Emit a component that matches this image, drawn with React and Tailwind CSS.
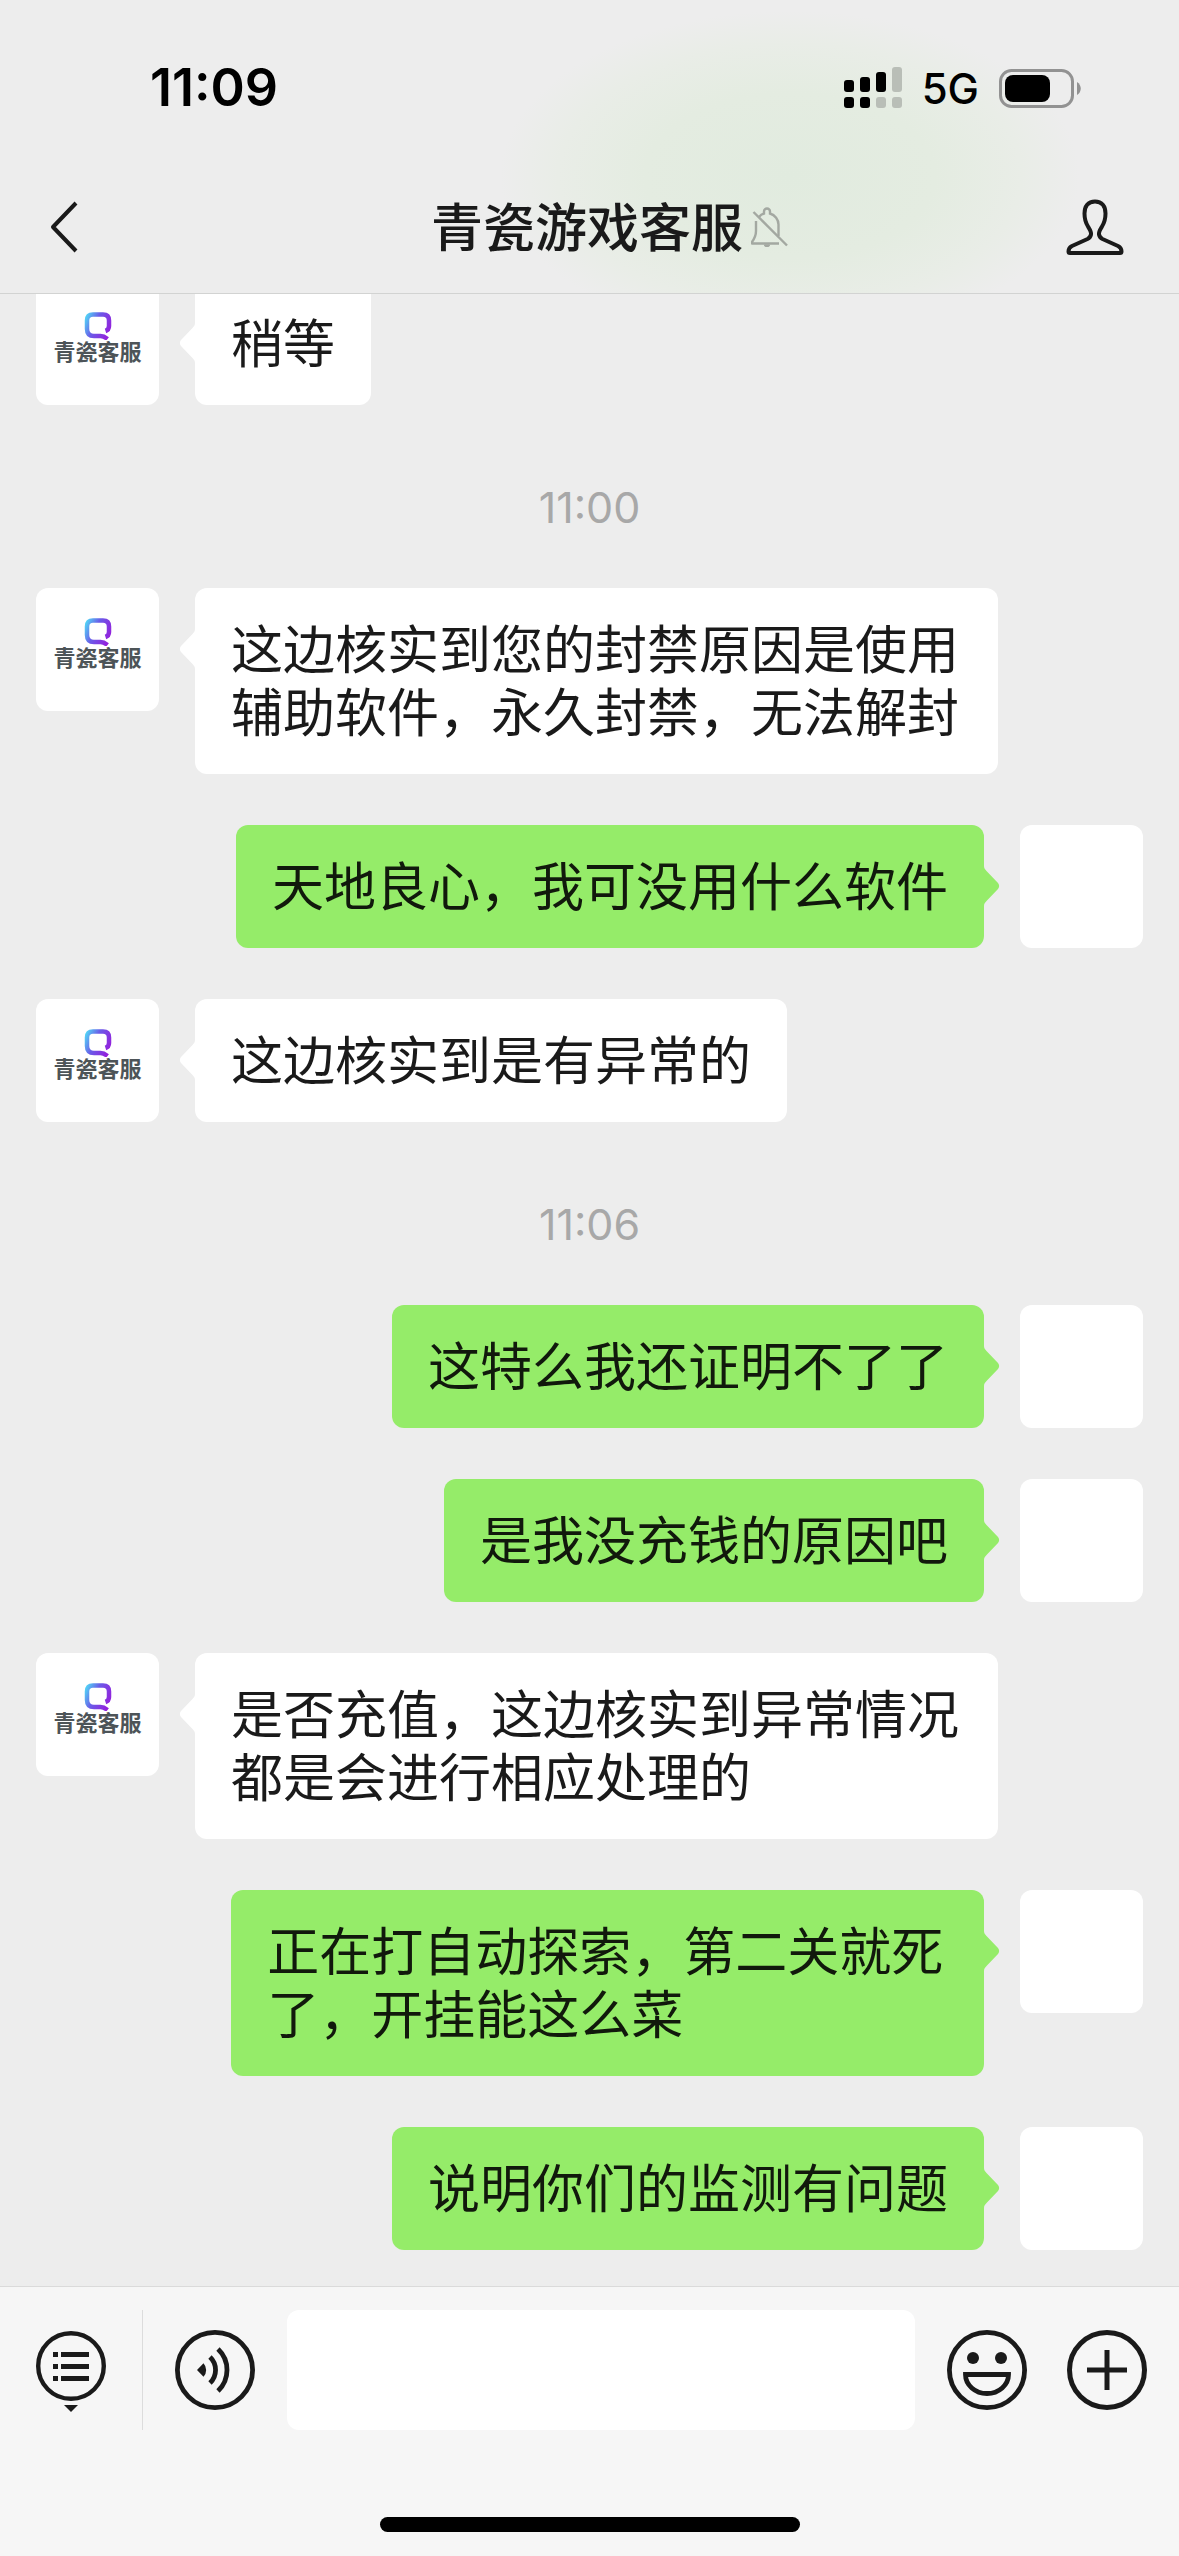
import React, { useState } from 'react';

const messages = [
  { id: 1, from: 'service', text: '稍等' },
  { id: 2, type: 'time', text: '11:00' },
  { id: 3, from: 'service', text: '这边核实到您的封禁原因是使用辅助软件，永久封禁，无法解封' },
  { id: 4, from: 'me', text: '天地良心，我可没用什么软件' },
  { id: 5, from: 'service', text: '这边核实到是有异常的' },
  { id: 6, type: 'time', text: '11:06' },
  { id: 7, from: 'me', text: '这特么我还证明不了了' },
  { id: 8, from: 'me', text: '是我没充钱的原因吧' },
  { id: 9, from: 'service', text: '是否充值，这边核实到异常情况都是会进行相应处理的' },
  { id: 10, from: 'me', text: '正在打自动探索，第二关就死了，开挂能这么菜' },
  { id: 11, from: 'me', text: '说明你们的监测有问题' },
];

const SignalIcon = () => (
  <svg width="58" height="42" viewBox="0 0 58 42" aria-hidden="true">
    <rect x="0" y="13" width="10" height="12" rx="3" />
    <rect x="16" y="10" width="10" height="15" rx="3" />
    <rect x="32" y="5" width="10" height="20" rx="3" />
    <rect x="48" y="0" width="10" height="25" rx="3" fill="#b9beb7" />
    <rect x="0" y="30" width="10" height="11" rx="3" />
    <rect x="16" y="30" width="10" height="11" rx="3" />
    <rect x="32" y="30" width="10" height="11" rx="3" fill="#b9beb7" />
    <rect x="48" y="30" width="10" height="11" rx="3" fill="#b9beb7" />
  </svg>
);

const BatteryIcon = () => (
  <svg width="82" height="39" viewBox="0 0 82 39" aria-hidden="true">
    <rect x="1.5" y="1.5" width="72" height="36" rx="11" fill="none" stroke="#929292" strokeWidth="3" />
    <rect x="6" y="6" width="45" height="27" rx="8" />
    <path d="M78 13c5 3 5 10 0 13z" fill="#929292" />
  </svg>
);

const BackIcon = () => (
  <svg width="28" height="52" viewBox="0 0 28 52" fill="none" stroke="#1a1a1a" strokeWidth="4" aria-hidden="true">
    <path d="M26 2L3 26l23 24" strokeLinejoin="round" />
  </svg>
);

const MutedIcon = () => (
  <svg width="38" height="40" viewBox="0 0 38 40" fill="none" stroke="#a3a8a1" strokeWidth="2.4" aria-hidden="true">
    <path d="M5 14v10c0 5-1.500 7.500-4 11v1.500h27" strokeLinejoin="round" />
    <path d="M8 10C9.500 8 11 7 13 6.500V4.500a3 3 0 0 1 6 0v2c5 1.500 8.500 6 8.500 11V29" />
    <path d="M2.500 5L36 38.500" />
    <path d="M14 37.500a2 1.500 0 0 0 4 0" fill="#a3a8a1" />
  </svg>
);

const PersonIcon = () => (
  <svg width="58" height="56" viewBox="0 0 58 56" fill="none" stroke="#1a1a1a" strokeWidth="4" aria-hidden="true">
    <path
      d="M29 2.500c-7 0-10.500 5-10.500 12 0 6 1 9 3.500 13s3.500 5.500 3 8-1.500 3.500-3.500 4.500L6 47c-2.500 1.300-3.500 3-3.500 5.500 0 .8.500 1.500 1.500 1.500h50c1 0 1.500-.7 1.500-1.500 0-2.500-1-4.200-3.500-5.500l-15.500-7c-2-1-3-2-3.500-4.500s.5-4 3-8 3.500-7 3.500-13c0-7-3.500-12-10.500-12z"
      strokeLinejoin="round"
    />
  </svg>
);

const MenuIcon = () => (
  <svg width="70" height="82" viewBox="0 0 70 82" aria-hidden="true">
    <circle cx="35" cy="35" r="32.800" fill="none" stroke="#1a1a1a" strokeWidth="4.400" />
    <g fill="#1a1a1a">
      <rect x="17" y="21" width="5" height="5" />
      <rect x="25" y="21" width="28" height="5" />
      <rect x="17" y="33" width="5" height="5" />
      <rect x="25" y="33" width="28" height="5" />
      <rect x="17" y="45" width="5" height="5" />
      <rect x="25" y="45" width="28" height="5" />
      <path d="M28 74h14l-7 7z" />
    </g>
  </svg>
);

const VoiceIcon = () => (
  <svg width="80" height="80" viewBox="0 0 80 80" fill="none" stroke="#1a1a1a" strokeWidth="4.800" aria-hidden="true">
    <circle cx="40" cy="40" r="37.600" />
    <path d="M28.500 33.200L22 40l6.500 6.800a10 10 0 0 0 0-13.600z" fill="#1a1a1a" stroke="none" />
    <path d="M35 27a18 18 0 0 1 0 26" />
    <path d="M43 19a29 29 0 0 1 0 42" />
  </svg>
);

const EmojiIcon = () => (
  <svg width="80" height="80" viewBox="0 0 80 80" fill="none" stroke="#1a1a1a" strokeWidth="4.800" aria-hidden="true">
    <circle cx="40" cy="40" r="37.600" />
    <circle cx="26" cy="28" r="6" fill="#1a1a1a" stroke="none" />
    <circle cx="54" cy="28" r="6" fill="#1a1a1a" stroke="none" />
    <path d="M18.500 44.500h43a21.500 19 0 0 1-43 0z" />
  </svg>
);

const PlusIcon = () => (
  <svg width="80" height="80" viewBox="0 0 80 80" fill="none" stroke="#1a1a1a" strokeWidth="5" aria-hidden="true">
    <circle cx="40" cy="40" r="37.500" />
    <path d="M40 20v40M20 40h40" />
  </svg>
);

const ServiceAvatar = () => (
  <div className="flex size-[123px] shrink-0 flex-col items-center rounded-xl bg-white pt-[30px]">
    <svg width="28" height="28" viewBox="0 0 27 28" fill="none" aria-hidden="true">
      <defs>
        <linearGradient id="logo" x1="0" y1="4" x2="27" y2="16" gradientUnits="userSpaceOnUse">
          <stop offset="0" stopColor="#4fe0f7" />
          <stop offset="0.45" stopColor="#6a5be8" />
          <stop offset="1" stopColor="#9420dc" />
        </linearGradient>
      </defs>
      <path
        d="M21 19c3-1 3.500-3 3.500-5V8.500c0-4-2-6-6-6H8.500c-4 0-6 2-6 6V17c0 4.500 2.500 7 7 7H16c2.500 0 4.500 1 7 3"
        stroke="url(#logo)"
        strokeWidth="4.500"
      />
    </svg>
    <span className="whitespace-nowrap text-[22px] font-bold leading-5 text-[#4d5458]">青瓷客服</span>
  </div>
);

const MyAvatar = () => <div className="size-[123px] shrink-0 rounded-xl bg-white" />;

const Tail = ({ mine }) => (
  <svg
    width="16"
    height="40"
    viewBox="0 0 16 40"
    className={mine ? 'absolute top-[41px] left-full -scale-x-100' : 'absolute top-[41px] right-full'}
    aria-hidden="true"
  >
    <path d="M16 0c0 2-1 3.500-2.500 5L2 17c-1.500 1.800-1.500 4.200 0 6l11.500 12c1.500 1.500 2.500 3 2.500 5z" fill={mine ? '#95ec69' : '#ffffff'} />
  </svg>
);

const Message = ({ from, text }) => {
  const mine = from === 'me';

  return (
    <li className={mine ? 'flex flex-row-reverse items-start gap-9' : 'flex items-start gap-9'}>
      {mine ? <MyAvatar /> : <ServiceAvatar />}
      <div
        className={
          mine
            ? 'relative max-w-[68%] rounded-xl bg-[#95ec69] px-9 pt-[27px] pb-[33px] text-[#11190c]'
            : 'relative max-w-[72.5%] rounded-xl bg-white px-9 pt-[27px] pb-[33px] text-[#1a1a1a]'
        }
      >
        <Tail mine={mine} />
        <p className="text-[52px] leading-[63px]">{text}</p>
      </div>
    </li>
  );
};

const Header = () => (
  <header className="shrink-0 border-b border-[#d2d3d2] bg-[#ededed] bg-[radial-gradient(ellipse_290px_165px_at_67%_60%,#e1ebdf_0%,#e4ece1_50%,#e9ede7_80%,#ededed_100%)]">
    <div className="flex h-[161px] items-center justify-between pt-[15px] pr-[98px] pl-[150px] font-[Inter,sans-serif] text-black">
      <time className="text-[52px] font-semibold">11:09</time>
      <div className="flex items-center gap-5">
        <SignalIcon />
        <span className="text-[42px] font-medium">5G</span>
        <BatteryIcon />
      </div>
    </div>
    <div className="grid h-[132px] grid-cols-[1fr_auto_1fr] items-center pr-[55px] pl-[50px]">
      <button type="button" aria-label="返回" className="justify-self-start">
        <BackIcon />
      </button>
      <h1 className="pb-[6px] text-[52px] leading-[63px] font-medium text-[#1a1a1a]">青瓷游戏客服</h1>
      <div className="flex items-center justify-between pl-2">
        <MutedIcon />
        <button type="button" aria-label="联系人">
          <PersonIcon />
        </button>
      </div>
    </div>
  </header>
);

const Toolbar = () => {
  const [draft, setDraft] = useState('');

  return (
    <footer className="shrink-0 border-t border-[#dadada] bg-[#f6f6f6] pt-[23px] pb-6">
      <div className="flex h-[120px] items-center gap-8 pr-8">
        <div className="flex items-center self-stretch border-r border-[#dcdcdc] px-9 pt-1">
          <button type="button" aria-label="菜单">
            <MenuIcon />
          </button>
        </div>
        <button type="button" aria-label="语音">
          <VoiceIcon />
        </button>
        <input
          type="text"
          aria-label="消息"
          value={draft}
          onChange={(e) => setDraft(e.target.value)}
          className="min-w-0 flex-1 self-stretch rounded-xl bg-white px-8 text-[52px] text-[#1a1a1a] outline-none"
        />
        <div className="flex items-center gap-10">
          <button type="button" aria-label="表情">
            <EmojiIcon />
          </button>
          <button type="button" aria-label="更多">
            <PlusIcon />
          </button>
        </div>
      </div>
      <div className="mx-auto mt-[87px] h-[15px] w-[420px] rounded-full bg-black" />
    </footer>
  );
};

const App = () => {
  return (
    <div className="flex h-screen flex-col bg-[#ededed] font-['Noto_Sans_CJK_SC',sans-serif]">
      <Header />
      <main className="flex min-h-0 flex-1 flex-col justify-end overflow-hidden">
        <ul className="flex flex-col gap-[51px] px-9 pb-9">
          {messages.map((m) =>
            m.type === 'time' ? (
              <li key={m.id} className="pt-[21px] text-center font-[Inter,sans-serif] text-[43px] leading-[60px] text-[#a8a8a8]">
                {m.text}
              </li>
            ) : (
              <Message key={m.id} from={m.from} text={m.text} />
            )
          )}
        </ul>
      </main>
      <Toolbar />
    </div>
  );
};

export default App;
